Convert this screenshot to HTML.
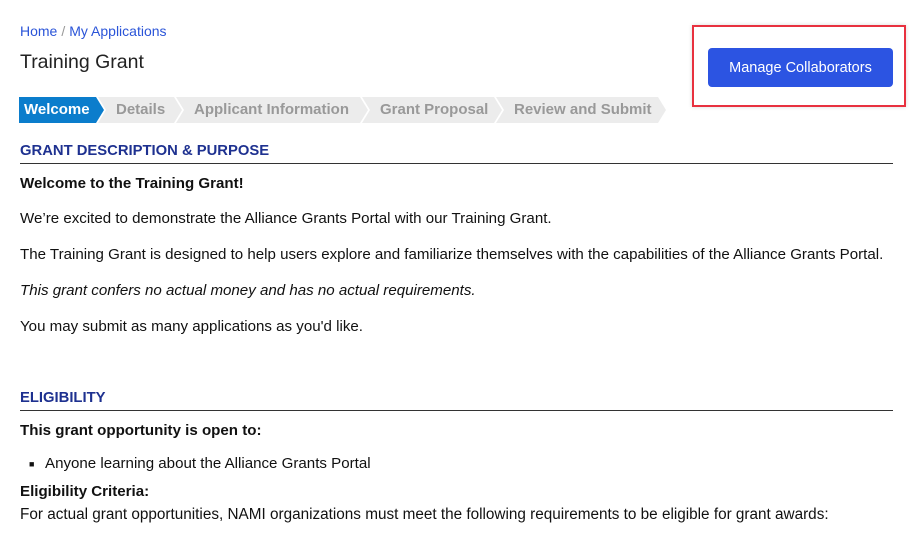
<!DOCTYPE html>
<html><head><meta charset="utf-8"><style>
body{margin:0;width:914px;height:536px;background:#fff;font-family:"Liberation Sans",sans-serif;color:#111;position:relative;overflow:hidden}
.a{position:absolute;white-space:nowrap;font-size:15.1px;line-height:18px}
.bc{left:20px;top:22px;color:#2a54d8;font-size:14px}
.bc span{color:#999;margin:0 4px}
h1{position:absolute;left:20px;top:51px;margin:0;font-weight:normal;font-size:19.5px;color:#222}
.box{position:absolute;left:692px;top:25px;width:210px;height:78px;border:2px solid #e8313f;box-shadow:0 0 4px rgba(0,0,0,.15)}
.btn{position:absolute;left:708px;top:48px;width:185px;height:39px;background:#2c54e2;border-radius:4px;color:#fff;font-size:14.5px;line-height:40px;text-align:center}
.st{position:absolute;top:97px;height:26px;line-height:26px;font-weight:bold;font-size:15px;color:#999;background:#ececec;clip-path:polygon(0 0,calc(100% - 8px) 0,100% 50%,calc(100% - 8px) 100%,0 100%,8px 50%);padding-left:18px;box-sizing:border-box}
.h{position:absolute;left:20px;width:873px;border-bottom:1px solid #333;color:#1e3190;font-weight:bold;font-size:14.8px;line-height:20px;padding-bottom:2px}
b{font-weight:bold}
</style></head><body>
<div class="a bc">Home<span>/</span>My Applications</div>
<h1>Training Grant</h1>
<div class="box"></div>
<div class="btn">Manage Collaborators</div>
<div class="st" style="left:496px;width:170px">Review and Submit</div>
<div class="st" style="left:362px;width:140px">Grant Proposal</div>
<div class="st" style="left:176px;width:192px">Applicant Information</div>
<div class="st" style="left:98px;width:84px">Details</div>
<div class="st" style="left:19px;width:85px;background:#0b7dcc;color:#fff;padding-left:5px;clip-path:polygon(0 0,calc(100% - 8px) 0,100% 50%,calc(100% - 8px) 100%,0 100%)">Welcome</div>
<div class="h" style="top:141px">GRANT DESCRIPTION &amp; PURPOSE</div>
<div class="a" style="left:20px;top:175px"><b>Welcome to the Training Grant!</b></div>
<div class="a" style="left:20px;top:210px">We’re excited to demonstrate the Alliance Grants Portal with our Training Grant.</div>
<div class="a" style="left:20px;top:246px">The Training Grant is designed to help users explore and familiarize themselves with the capabilities of the Alliance Grants Portal.</div>
<div class="a" style="left:20px;top:282px"><i>This grant confers no actual money and has no actual requirements.</i></div>
<div class="a" style="left:20px;top:318px">You may submit as many applications as you'd like.</div>
<div class="h" style="top:388px">ELIGIBILITY</div>
<div class="a" style="left:20px;top:422px"><b>This grant opportunity is open to:</b></div>
<div class="a" style="left:29px;top:455px;font-size:9px">■</div>
<div class="a" style="left:45px;top:455px">Anyone learning about the Alliance Grants Portal</div>
<div class="a" style="left:20px;top:483px"><b>Eligibility Criteria:</b></div>
<div class="a" style="left:20px;top:506px;font-size:15.3px">For actual grant opportunities, NAMI organizations must meet the following requirements to be eligible for grant awards:</div>
</body></html>
